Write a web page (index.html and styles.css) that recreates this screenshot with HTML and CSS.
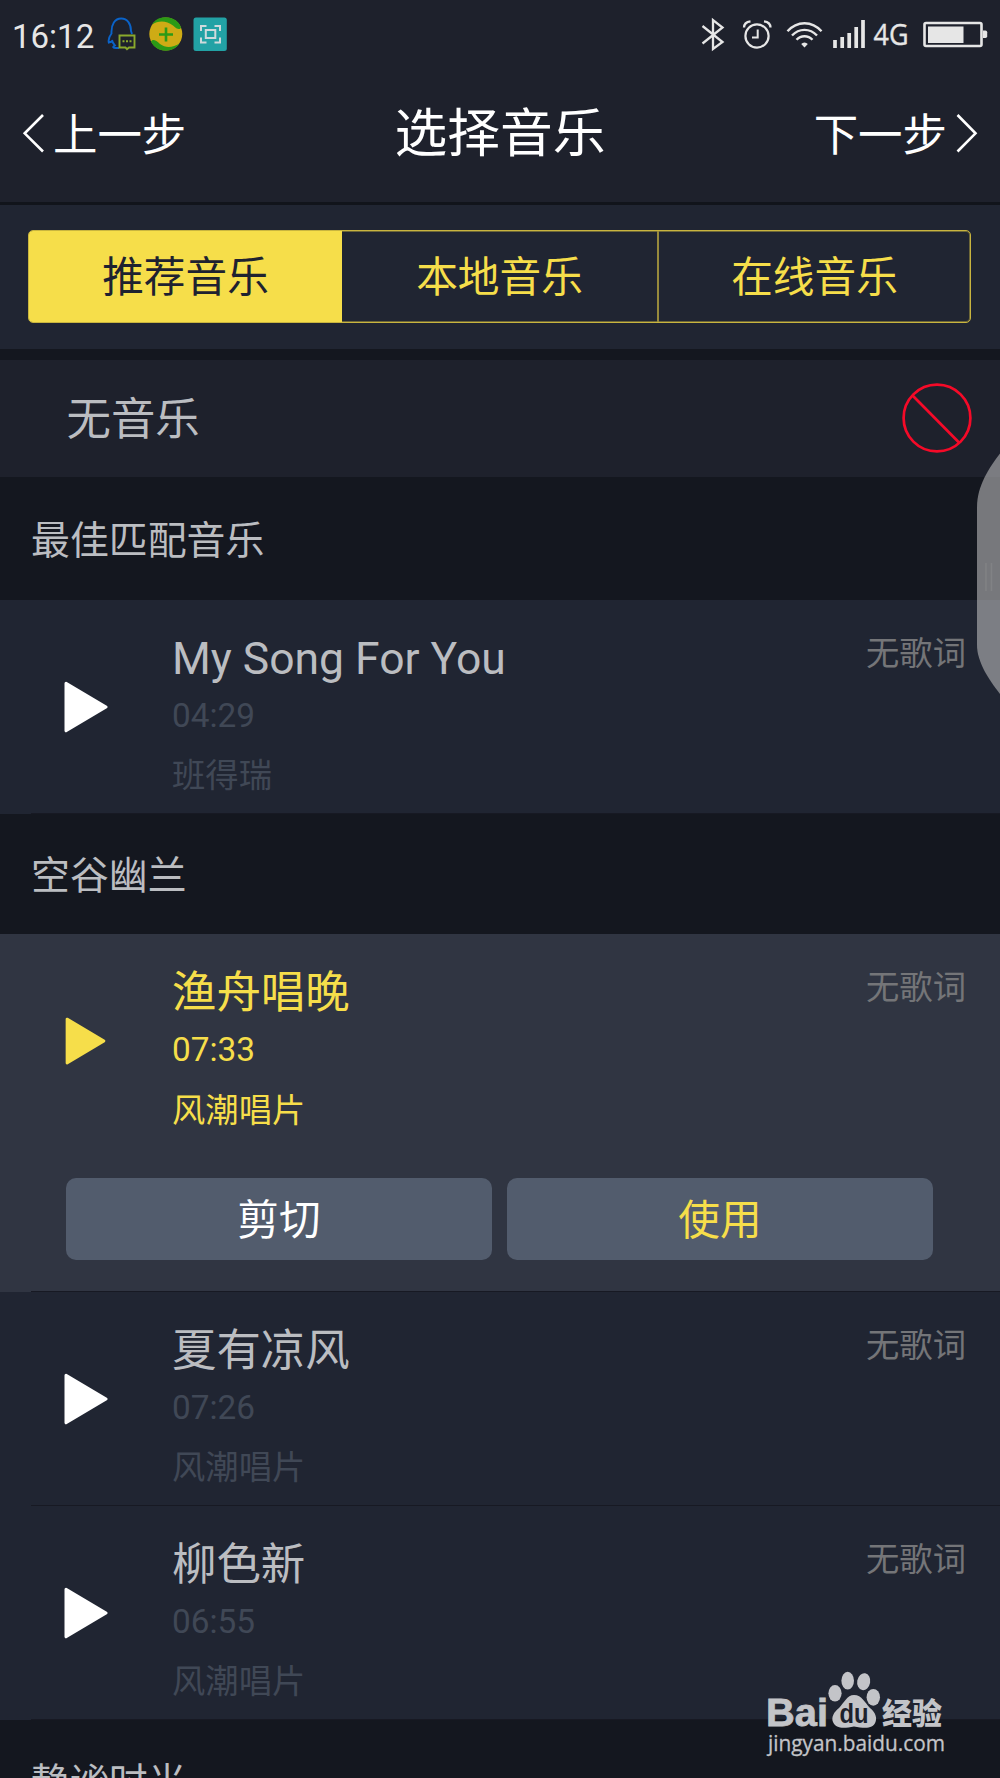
FILE: index.html
```html
<!DOCTYPE html>
<html lang="zh-CN">
<head>
<meta charset="utf-8">
<title>选择音乐</title>
<link rel="stylesheet" href="styles.css">
</head>
<body>
<svg class="defs" width="0" height="0" aria-hidden="true">
  <symbol id="play" viewBox="0 0 44 52"><path d="M2 2.2 42 26 2 49.8Z" fill="currentColor" stroke="currentColor" stroke-width="3" stroke-linejoin="round"/></symbol>
</svg>
<div class="screen">
  <div class="status">
    <span class="clock">16:12</span>
    <svg class="apps" width="120" height="36" viewBox="0 0 120 36" fill="none">
      <path d="M5.200 25.500 1.800 26.500C.800 22.500 3 19.500 4.500 17.500C4 8 8 2.500 14.200 2.500C20.500 2.500 24 8 24 15L25 18M5 24C5.500 27 7 28 8 29.500C5 31 6 32 9 32H12" stroke="#0a63c9" stroke-width="1.900"/>
      <path d="M12.500 19.500H27.500V31.500H22L20 33.200 18.500 31.500H12.500Z" stroke="#8aa92c" stroke-width="1.900"/>
      <path d="M15.500 25.300h2M19 25.300h2M22.500 25.300h2" stroke="#8aa92c" stroke-width="2"/>
      <circle cx="58.800" cy="18" r="16.500" fill="#ceab15"/>
      <path d="M45 8.500C49 2.500 54 1.300 59 1.300C67 1.500 72.500 6.500 74 11.500C73 14 70 13.500 66 9.500C59 4 51 4.500 45 8.500Z" fill="#2b9a16"/>
      <path d="M72.500 27.500C69 32.500 64 34.700 59 34.700C51.500 34.500 46.500 31 44 25.500C45.500 22.500 49 24 53 28C59 32.500 66 31.500 72.500 27.500Z" fill="#2b9a16"/>
      <path d="M59 11.500v14M52 18.500h14" stroke="#2b9a16" stroke-width="2.600"/>
      <rect x="86.500" y="1.500" width="33.300" height="33.500" rx="2.500" fill="#22a2a5"/>
      <path d="M94 15V10H99.500M107.500 10H113V15M113 21.500V26.500H107.500M99.500 26.500H94V21.500" stroke="#cfdadc" stroke-width="2"/>
      <rect x="98.800" y="14" width="9.500" height="8" stroke="#cfdadc" stroke-width="2"/>
    </svg>
    <svg class="signals" width="290" height="36" viewBox="0 0 290 36" fill="none" stroke="#e6e6e6" stroke-width="2.300">
      <path d="M2.500 9 22.500 25 13 32V3L22.500 10.500 2.500 26.500"/>
      <circle cx="57" cy="19" r="11.600" stroke-width="2.200"/>
      <path d="M57.700 12.500V20.500H52" stroke-width="2"/>
      <path d="M44 10.500C44 7 47 4.800 50.500 4.300M70.500 10.500C70.500 7 67.500 4.800 64 4.300" stroke-width="2.300"/>
      <path d="M87.500 14.300C97 3.500 112 3.500 121.500 14.300M92 18.500C99 11 110 11 117 18.500M96.500 22.800C101 18 108 18 112.500 22.800" stroke-width="2.400"/>
      <path d="M104.500 30.500 101.200 27A4.300 4.300 0 0 1 107.800 27Z" fill="#e6e6e6" stroke="none"/>
      <path d="M135 31v-8M142.200 31V20M149.200 31V16M156.200 31V10M163 31V3" stroke-width="3.700"/>
      <text class="net" x="173.500" y="27.500" textLength="35" lengthAdjust="spacingAndGlyphs" stroke-width=".4">4G</text>
      <rect x="224.500" y="6" width="57" height="23" rx="1.500" stroke-width="2.600"/>
      <rect x="228" y="9.500" width="35.500" height="16.500" fill="#e6e6e6" stroke="none"/>
      <path d="M283 13.500h2.500q1.700 0 1.700 1.700v4q0 1.700-1.700 1.700h-2.500z" fill="#e6e6e6" stroke="none"/>
    </svg>
  </div>

  <header class="nav">
    <a class="step prev"><svg width="22" height="40" viewBox="0 0 22 40"><path d="M21 2 2.700 20.300 21 38.500" fill="none" stroke="#fff" stroke-width="2.600"/></svg><span>上一步</span></a>
    <h1>选择音乐</h1>
    <a class="step next"><span>下一步</span><svg width="22" height="40" viewBox="0 0 22 40"><path d="M1.500 2 19.500 20.300 1.500 38.500" fill="none" stroke="#fff" stroke-width="2.600"/></svg></a>
  </header>

  <div class="tabbar">
    <div class="tabs">
      <div class="tab on">推荐音乐</div>
      <div class="tab">本地音乐</div>
      <div class="tab">在线音乐</div>
    </div>
  </div>

  <div class="none">
    <span>无音乐</span>
    <svg width="70" height="70" viewBox="0 0 70 70" fill="none" stroke="#f50a28" stroke-width="2.700"><circle cx="35" cy="35" r="33.400"/><path d="M10.800 12.700 57 59.500"/></svg>
  </div>

  <h2>最佳匹配音乐</h2>
  <article class="song">
    <svg class="play"><use href="#play"/></svg>
    <div class="info"><h3>My Song For You</h3><time>04:29</time><p>班得瑞</p></div>
    <span class="tag">无歌词</span>
  </article>

  <h2 class="short">空谷幽兰</h2>
  <article class="song active">
    <svg class="play"><use href="#play"/></svg>
    <div class="info"><h3>渔舟唱晚</h3><time>07:33</time><p>风潮唱片</p></div>
    <span class="tag">无歌词</span>
    <div class="actions"><button>剪切</button><button class="use">使用</button></div>
  </article>
  <article class="song">
    <svg class="play"><use href="#play"/></svg>
    <div class="info"><h3>夏有凉风</h3><time>07:26</time><p>风潮唱片</p></div>
    <span class="tag">无歌词</span>
  </article>
  <article class="song">
    <svg class="play"><use href="#play"/></svg>
    <div class="info"><h3>柳色新</h3><time>06:55</time><p>风潮唱片</p></div>
    <span class="tag">无歌词</span>
  </article>
  <h2 class="last">静谧时光</h2>

  <svg class="handle" width="24" height="242" viewBox="0 0 24 242">
    <path d="M24 .500C13 15 1 33 1 54V192C1 209 13 227 24 241Z" fill="#c8c8c8" fill-opacity=".55"/>
    <path d="M10 110v28M15.500 110v28" stroke="#8a8b8d" stroke-opacity=".55" stroke-width="1.600"/>
  </svg>

  <svg class="watermark" width="200" height="100" viewBox="0 0 200 100" fill="#c3c4c8">
    <text class="bai" x="6" y="61" textLength="62" lengthAdjust="spacingAndGlyphs">Bai</text>
    <ellipse cx="75" cy="28.300" rx="6.600" ry="8.300"/>
    <ellipse cx="87.700" cy="15.700" rx="6.300" ry="8.900"/>
    <ellipse cx="103.700" cy="16.700" rx="6.500" ry="8.500" transform="rotate(10 103.700 16.700)"/>
    <ellipse cx="113.300" cy="32.300" rx="6.700" ry="8.400"/>
    <path d="M94 30C102 30 105 38 110 43C116 48 117 53 115.500 57C113 64 105 63.500 94 61.500C84 63.500 76 64 73 57C71 52 74 47 79 43C84 38 87 30 94 30Z"/>
    <text class="du" x="79.500" y="57.500" textLength="29" lengthAdjust="spacingAndGlyphs">du</text>
    <text class="exp" x="122" y="58.500" textLength="60">经验</text>
    <text class="url" x="8" y="86" textLength="177" lengthAdjust="spacingAndGlyphs">jingyan.baidu.com</text>
  </svg>
</div>
</body>
</html>
```
FILE: styles.css
```css
* { box-sizing: border-box; margin: 0; padding: 0; }
body {
  background: #14171f;
  font-family: Roboto, "Noto Sans CJK SC", sans-serif;
  color: #bbbdc1;
}
h1, h2, h3 { font-weight: 400; }
.defs { display: block; }
.screen { position: relative; width: 1000px; height: 1778px; overflow: hidden; }

.status {
  height: 68px;
  display: flex;
  align-items: flex-start;
  padding: 16px 8px 0 12px;
  background: #1e212c;
  color: #e6e6e6;
}
.clock { width: 95px; font-size: 33px; line-height: 41px; }
.signals { margin-left: auto; margin-right: 2px; margin-top: 1px; overflow: visible; }
.net { font: 29px "Open Sans", sans-serif; fill: #e6e6e6; }

.nav {
  height: 137px;
  display: grid;
  grid-template-columns: 1fr auto 1fr;
  background: #1e212c;
  border-bottom: 3px solid #11141b;
  color: #fff;
  padding: 0 22px;
}
.nav h1 { font-size: 52.8px; line-height: 60px; padding-top: 36px; }
.step { display: flex; padding-top: 45px; font-size: 44.44px; line-height: 44px; }
.step span { margin-top: 1px; }
.prev { gap: 9px; }
.next { justify-content: flex-end; gap: 9px; }

.tabbar { height: 155px; padding: 25px 28px 0; background: #202532; border-bottom: 11px solid #14171f; }
.tabs {
  height: 93px;
  display: grid;
  grid-template-columns: 313px 315px 1fr;
  width: 943px;
  border: 1px solid #c9b53f;
  border-radius: 5px;
  box-shadow: inset 0 0 0 1px #6d6738;
  overflow: hidden;
}
.tab { font-size: 41.67px; line-height: 93px; text-align: center; color: #f6de4a; }
.tab + .tab { border-left: 2px solid #978a3c; }
.tab.on { background: #f6de4a; color: #1e2230; }
.tab.on + .tab { border-left: 0; }

.none {
  height: 117px;
  display: flex;
  justify-content: space-between;
  align-items: center;
  padding: 0 28px 2px 66.500px;
  background: #1e212c;
  font-size: 44.44px;
}
.none span { line-height: 60px; margin-top: 5px; }

h2 { height: 123px; padding: 34px 31px 0; font-size: 38.89px; line-height: 60px; background: #14171f; }
h2.short { height: 120px; padding-top: 32px; }
h2.last { height: 59px; padding-top: 33px; }

.song {
  height: 214px;
  display: grid;
  grid-template-columns: 108px 1fr auto;
  padding: 29px 34px 0 64px;
  background: linear-gradient(#171923, #171923) 31px 100% / 100% 1px no-repeat #202532;
}
.play { width: 44px; height: 52px; margin-top: 51.500px; color: #fff; }
.info h3 { font-size: 44.44px; line-height: 60px; }
.info time { display: block; margin-top: 2px; font-size: 33.33px; line-height: 50px; color: #404856; }
.info p { margin-top: 10px; font-size: 33.33px; line-height: 50px; color: #404856; }
.tag { font-size: 33.33px; line-height: 50px; color: #747578; }

.song.active { height: 358px; background-color: #303542; grid-template-rows: 215px 82px; }
.active .play { width: 41px; height: 48px; margin: 54px 0 0 1px; color: #f6de4a; }
.active h3, .active time, .active p { color: #f6de4a; }
.active p { margin-top: 11px; }
.actions { grid-column: 1 / -1; display: grid; grid-template-columns: 1fr 1fr; gap: 15px; padding: 0 33px 0 2px; }
button {
  height: 82px;
  border: 0;
  border-radius: 10px;
  background: #525c6d;
  color: #fff;
  font: 41.67px/86px Roboto, "Noto Sans CJK SC", sans-serif;
}
button.use { color: #f6de4a; }

.handle { position: absolute; left: 976px; top: 453px; }
.watermark { position: absolute; left: 760px; top: 1665px; }
.bai { font: bold 39px "Liberation Sans", sans-serif; stroke: #c3c4c8; stroke-width: .8px; }
.du { font: bold 27px "Liberation Sans", sans-serif; fill: #1d212c; }
.exp { font: 900 30px "Noto Sans CJK SC", sans-serif; }
.url { font: 22px "Open Sans", sans-serif; stroke: #c3c4c8; stroke-width: .3px; }
```
